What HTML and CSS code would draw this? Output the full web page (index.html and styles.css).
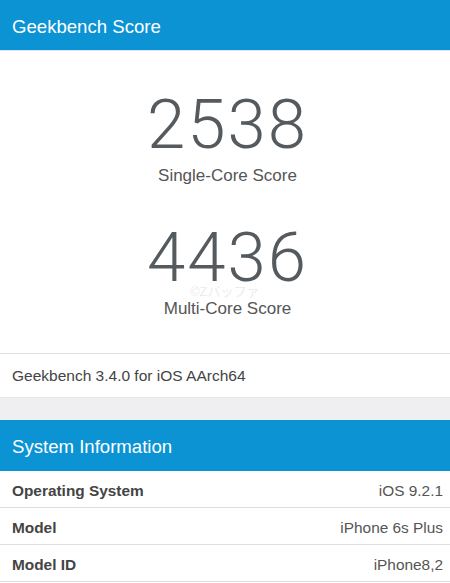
FILE: index.html
```html
<!DOCTYPE html>
<html lang="en">
<head>
    <meta charset="UTF-8">
    <title>Geekbench Score</title>
    <meta name="viewport" content="width=device-width, initial-scale=1">
    <link rel="stylesheet" href="styles.css">
</head>
<body>
    <header class="bar">Geekbench Score</header>

    <section class="scores">
        <div class="score">
            <div class="number">2538</div>
            <div class="label">Single-Core Score</div>
        </div>
        <div class="score">
            <div class="number">4436</div>
            <div class="label">Multi-Core Score</div>
        </div>
        <span class="mark">©Zバッファ</span>
    </section>

    <div class="version">Geekbench 3.4.0 for iOS AArch64</div>

    <div class="gap"></div>

    <header class="bar">System Information</header>

    <div class="info">
        <div class="row"><span class="key">Operating System</span><span class="val">iOS 9.2.1</span></div>
        <div class="row"><span class="key">Model</span><span class="val">iPhone 6s Plus</span></div>
        <div class="row"><span class="key">Model ID</span><span class="val">iPhone8,2</span></div>
    </div>
</body>
</html>
```

FILE: styles.css
```css
body {
    margin: 0;
    padding: 0;
    background: #fff;
    font-family: "Helvetica Neue", "Liberation Sans", Arial, sans-serif;
    color: #444;
}

.bar {
    background-color: #0b93d4;
    color: white;
    height: 50px;
    line-height: 53px;
    padding-left: 12px;
    font-size: 18.6px;
}

.scores {
    position: relative;
    border-top: 1px solid #e4e4e4;
    border-bottom: 1px solid #e2e2e2;
    padding: 46px 0 34px 5px;
    text-align: center;
}

.score + .score {
    margin-top: 44px;
}

.number {
    font-family: Roboto, "Helvetica Neue", sans-serif;
    font-weight: 300;
    font-size: 69px;
    line-height: 56px;
    letter-spacing: 2px;
    color: #555a5f;
}

.label {
    font-size: 17px;
    color: #555;
    margin-top: 13px;
    line-height: 20px;
}

.mark {
    position: absolute;
    left: 190px;
    top: 235px;
    font-size: 13px;
    line-height: 12px;
    color: #ececec;
    font-family: "Liberation Sans", "Noto Sans CJK JP", sans-serif;
}

.version {
    height: 43px;
    line-height: 44px;
    padding-left: 12px;
    font-size: 15.5px;
    color: #444;
}

.gap {
    height: 22px;
    background: #efeff2;
    border-top: 1px solid #e6e6e6;
}

.info {
    border-top: 1px solid #0b93d4;
}

.info .row {
    display: flex;
    justify-content: space-between;
    height: 36px;
    line-height: 39px;
    padding: 0 7px 0 12px;
    border-bottom: 1px solid #dedede;
    font-size: 15.4px;
}

.key {
    font-weight: bold;
    color: #444;
}

.val {
    color: #555;
}
```
